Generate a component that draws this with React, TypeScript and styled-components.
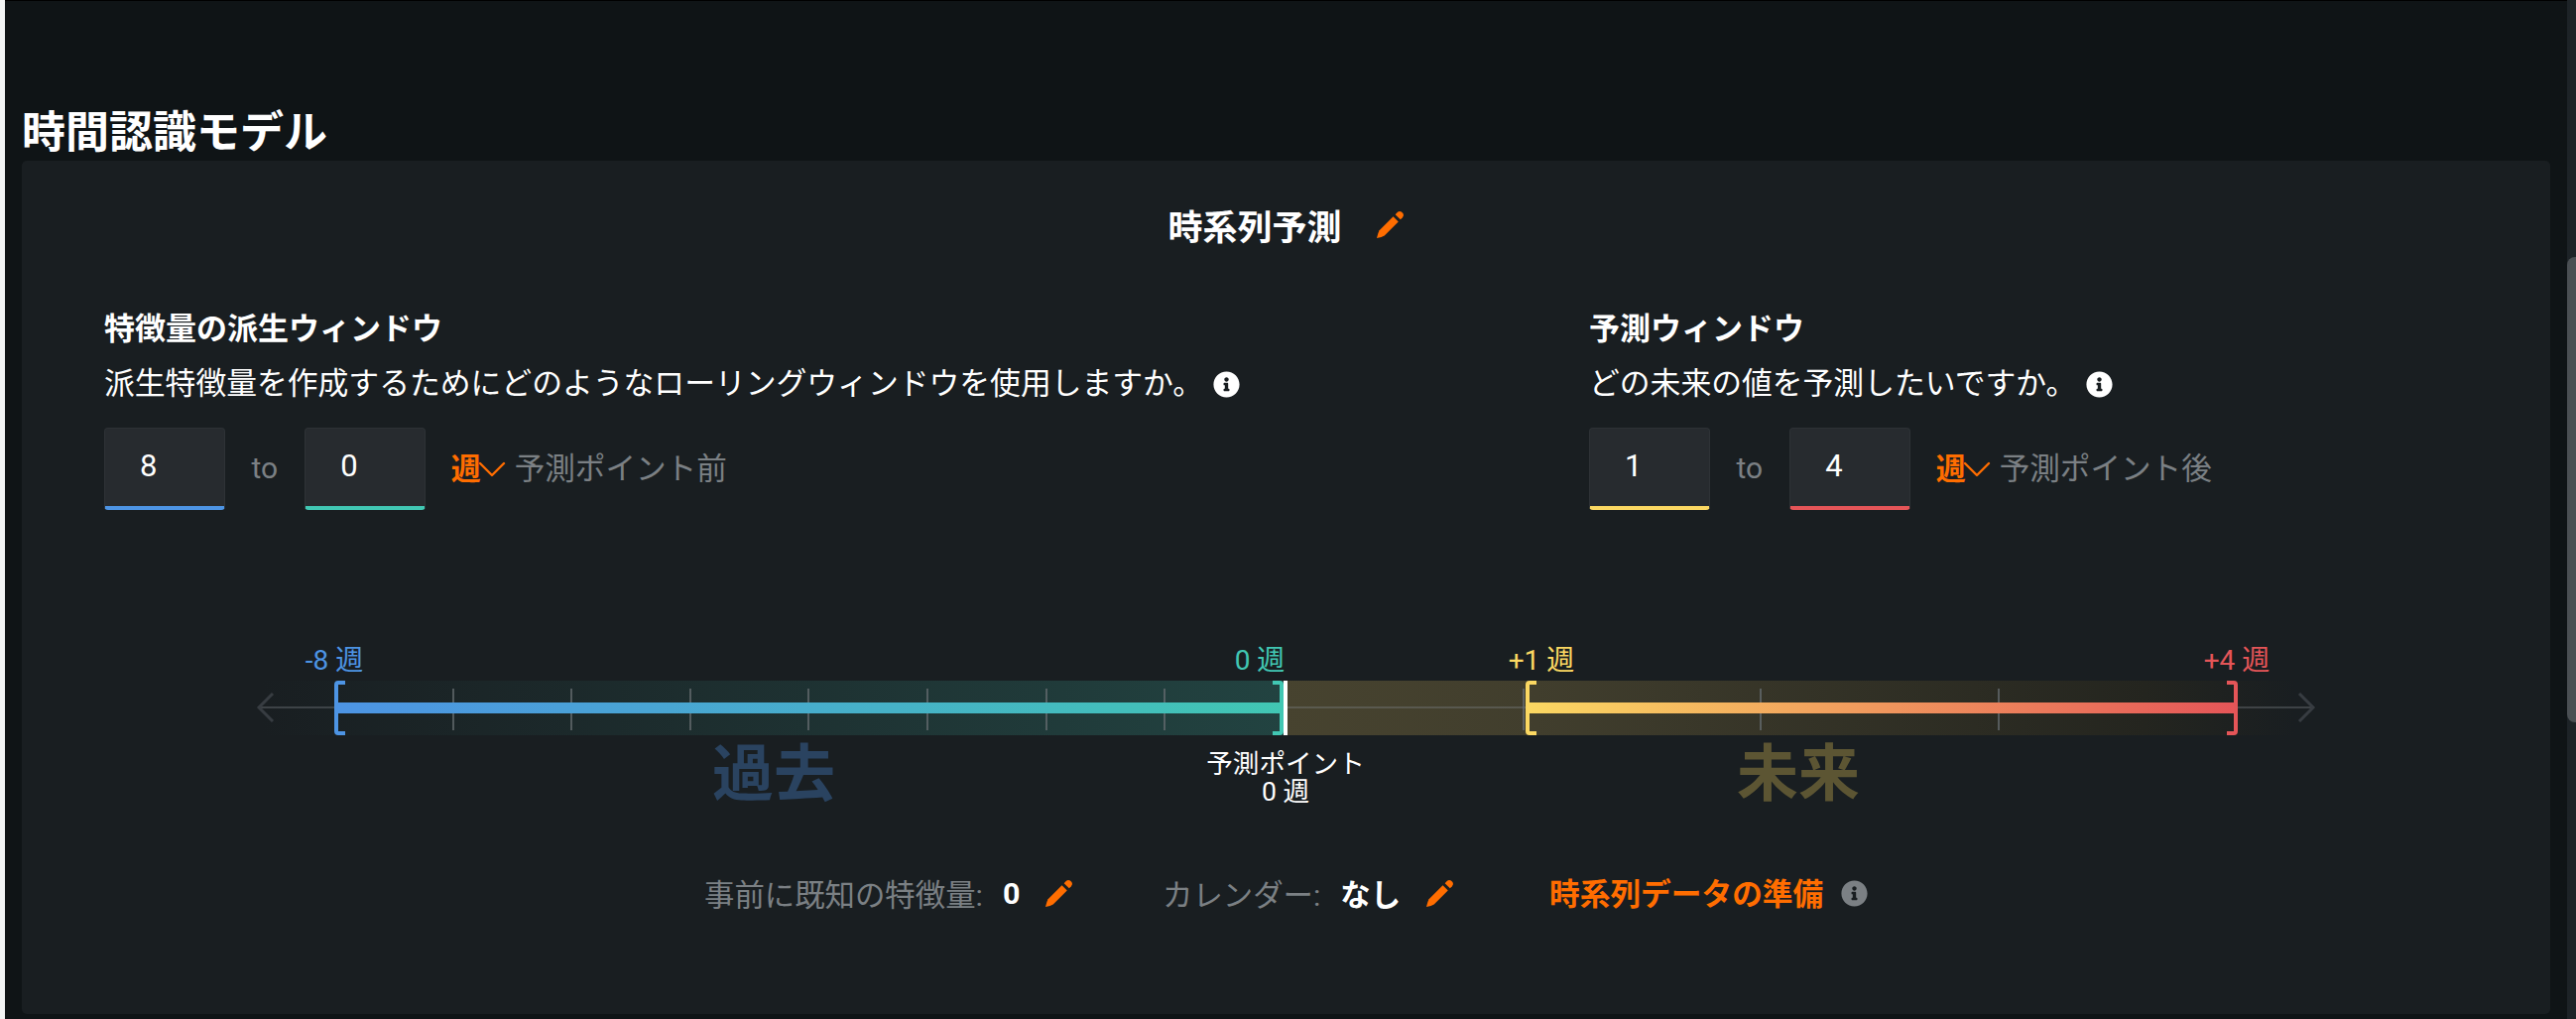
import styled, { createGlobalStyle } from 'styled-components';
import { FaInfoCircle } from 'react-icons/fa';
import { LuChevronDown } from 'react-icons/lu';

const ORANGE = '#ff6d00';
const BLUE = '#4d94e4';
const TEAL = '#41c7b3';
const YELLOW = '#fbd862';
const RED = '#e55558';

const GlobalStyle = createGlobalStyle`
    html, body {
        margin: 0;
        height: 100%;
        overflow: hidden;
        background: #0f1416;
    }
    body {
        font-family: Roboto, "Noto Sans CJK JP", sans-serif;
        color: #fff;
    }
`;

const Page = styled.div`
    display: flex;
    height: 1027px;
    background: #f3f5f5;
    padding-left: 5px;
    box-sizing: border-box;
`;

const Main = styled.main`
    flex: 1;
    min-width: 0;
    background: #0f1416;
    border-top: 1px solid #000;
    padding: 0 17px;
`;

const Scrollbar = styled.div`
    width: 9px;
    background: #1d2327;
    padding-top: 259px;
    box-sizing: border-box;
    height: 100%;
`;

const ScrollThumb = styled.div`
    height: 469px;
    background: #4a4f53;
    border-radius: 8px 0 0 8px;
`;

const PageTitle = styled.h1`
    margin: 0;
    padding-top: 103px;
    font-size: 44px;
    line-height: 60px;
    font-weight: 700;
    height: 58px;
`;

const Panel = styled.section`
    background: #191e21;
    border-radius: 5px;
    height: 860px;
    padding-top: 40px;
    box-sizing: border-box;
`;

const ModelTitle = styled.div`
    display: flex;
    justify-content: center;
    align-items: center;
    gap: 35px;
    height: 48px;
    font-size: 35px;
    font-weight: 700;
`;

const PencilSvg = styled.svg`
    color: ${ORANGE};
    width: 28px;
    height: 28px;
    flex: none;
    fill: currentColor;
`;

const EditIcon = () => (
    <PencilSvg viewBox="0 0 27 27">
        <path d="M16 6 L21 11 L7.5 24.5 Q5 26 0 27 Q1 22 2.5 19.5 Z" />
        <path d="M18 4 L20 2 Q22 0 24 1.5 L25.5 3 Q27 5 25 7 L23 9 Z" />
    </PencilSvg>
);

const Windows = styled.div`
    display: grid;
    grid-template-columns: 1497px 1fr;
    padding: 62px 0 0 83px;
`;

const WindowTitle = styled.div`
    font-size: 31px;
    line-height: 40px;
    font-weight: 700;
`;

const WindowQuestion = styled.div`
    display: flex;
    align-items: center;
    gap: 10px;
    font-size: 30.8px;
    line-height: 40px;
    margin-top: 15px;
    white-space: nowrap;
`;

const InfoIcon = styled(FaInfoCircle)<{ $muted?: boolean }>`
    color: ${p => (p.$muted ? '#7b8084' : '#fff')};
    width: 27px;
    height: 27px;
    flex: none;
`;

const RangeRow = styled.div`
    display: flex;
    align-items: center;
    gap: 27px;
    margin-top: 24px;
`;

const WeekInput = styled.input<{ $accent: string }>`
    width: 121.5px;
    height: 83px;
    box-sizing: border-box;
    padding: 0 0 3px 35px;
    background: #272b2f;
    border: 1px solid #2e3236;
    border-bottom: 4px solid ${p => p.$accent};
    border-radius: 4px;
    outline: none;
    color: #fff;
    font: 400 31px Roboto, sans-serif;
`;

const RangeTo = styled.span`
    color: #7b8084;
    font-size: 30px;
    margin-bottom: 2px;
`;

const UnitGroup = styled.div`
    display: flex;
    align-items: center;
    margin: 0 0 5px -1px;
`;

const UnitSelect = styled.span`
    display: flex;
    align-items: center;
    color: ${ORANGE};
    font-size: 30px;
    font-weight: 700;
    svg {
        width: 48px;
        height: 48px;
        margin: 6px -12px 0 -13px;
        stroke-width: 1.2;
    }
`;

const UnitNote = styled.span`
    color: #7b8084;
    font-size: 30.6px;
    margin-left: 11px;
`;

const Timeline = styled.div`
    position: relative;
    height: 180px;
    margin-top: 126px;
`;

const TimelineChart = styled.svg`
    display: block;
    width: 100%;
    height: 180px;
`;

const Marker = styled.span<{ $color: string }>`
    position: absolute;
    top: 8px;
    transform: translateX(-50%);
    color: ${p => p.$color};
    font-size: 28px;
    line-height: 36px;
    white-space: nowrap;
`;

const ForecastPoint = styled.div`
    position: absolute;
    top: 116px;
    left: 1274px;
    transform: translateX(-50%);
    text-align: center;
    font-size: 26.6px;
    line-height: 28px;
    white-space: nowrap;
`;

const EraLabel = styled.span<{ $color: string; $left: number }>`
    position: absolute;
    top: 105px;
    left: ${p => p.$left}px;
    transform: translateX(-50%);
    color: ${p => p.$color};
    font-size: 62px;
    line-height: 72px;
    font-weight: 700;
    white-space: nowrap;
`;

const Footer = styled.div`
    display: flex;
    align-items: center;
    height: 40px;
    margin-top: 60px;
    padding-left: 688px;
    font-size: 30.4px;
    white-space: nowrap;
`;

const FooterLabel = styled.span`
    color: #7b8084;
`;

const FooterValue = styled.span`
    font-weight: 700;
    margin-left: 20px;
`;

const FooterItem = styled.div<{ $width: number }>`
    display: flex;
    align-items: center;
    width: ${p => p.$width}px;
    svg {
        margin-left: 26px;
    }
`;

const PrepareLink = styled.span`
    color: ${ORANGE};
    font-weight: 700;
    font-size: 30.7px;
    margin: 0 0 3px -2px;
`;

const PrepareIcon = styled(InfoIcon)`
    margin-left: 18px;
`;

// chart coordinates are panel-relative: x = page x - 22, y = page y - 640
const AXIS_Y = 73;
const BAND_TOP = 46;
const BAND_H = 55;
const X_START = 315;
const X_ZERO = 1272;
const X_FIRST = 1516;
const X_END = 2234;
const pastTicks = [435, 554, 674, 793, 913, 1033, 1152];
const futureTicks = [1514, 1753, 1993];

const Bracket = ({ x, color, flip }: { x: number; color: string; flip?: boolean }) => {
    const dir = flip ? -1 : 1;
    const top = BAND_TOP + 2;
    const bottom = BAND_TOP + BAND_H - 2;
    return (
        <path
            d={`M${x + 11 * dir} ${top} H${x + 4 * dir} Q${x + 2 * dir} ${top} ${x + 2 * dir} ${top + 2} V${bottom - 2} Q${x + 2 * dir} ${bottom} ${x + 4 * dir} ${bottom} H${x + 11 * dir}`}
            fill="none"
            stroke={color}
            strokeWidth={4}
        />
    );
};

export default function App() {
    return (
        <Page>
            <GlobalStyle />
            <Main>
                <PageTitle>時間認識モデル</PageTitle>
                <Panel>
                    <ModelTitle>
                        時系列予測
                        <EditIcon />
                    </ModelTitle>
                    <Windows>
                        <div>
                            <WindowTitle>特徴量の派生ウィンドウ</WindowTitle>
                            <WindowQuestion>
                                派生特徴量を作成するためにどのようなローリングウィンドウを使用しますか。
                                <InfoIcon />
                            </WindowQuestion>
                            <RangeRow>
                                <WeekInput readOnly value="8" $accent={BLUE} />
                                <RangeTo>to</RangeTo>
                                <WeekInput readOnly value="0" $accent={TEAL} />
                                <UnitGroup>
                                    <UnitSelect>週<LuChevronDown /></UnitSelect>
                                    <UnitNote>予測ポイント前</UnitNote>
                                </UnitGroup>
                            </RangeRow>
                        </div>
                        <div>
                            <WindowTitle>予測ウィンドウ</WindowTitle>
                            <WindowQuestion>
                                どの未来の値を予測したいですか。
                                <InfoIcon />
                            </WindowQuestion>
                            <RangeRow>
                                <WeekInput readOnly value="1" $accent={YELLOW} />
                                <RangeTo>to</RangeTo>
                                <WeekInput readOnly value="4" $accent={RED} />
                                <UnitGroup>
                                    <UnitSelect>週<LuChevronDown /></UnitSelect>
                                    <UnitNote>予測ポイント後</UnitNote>
                                </UnitGroup>
                            </RangeRow>
                        </div>
                    </Windows>
                    <Timeline>
                        <TimelineChart viewBox="0 0 2549 180" preserveAspectRatio="xMinYMin">
                            <defs>
                                <linearGradient id="bandPast" x1="0" x2="1" y1="0" y2="0">
                                    <stop offset="0" stopColor="#191e21" />
                                    <stop offset="1" stopColor="#224341" />
                                </linearGradient>
                                <linearGradient id="bandFuture" x1="0" x2="1" y1="0" y2="0">
                                    <stop offset="0" stopColor="#47432f" />
                                    <stop offset="0.25" stopColor="#413e2d" />
                                    <stop offset="0.85" stopColor="#24251f" />
                                    <stop offset="1" stopColor="#191e21" />
                                </linearGradient>
                                <linearGradient id="barPast" x1="0" x2="1" y1="0" y2="0">
                                    <stop offset="0" stopColor={BLUE} />
                                    <stop offset="1" stopColor={TEAL} />
                                </linearGradient>
                                <linearGradient id="barFuture" x1="0" x2="1" y1="0" y2="0">
                                    <stop offset="0" stopColor={YELLOW} />
                                    <stop offset="1" stopColor={RED} />
                                </linearGradient>
                            </defs>
                            <rect x={242} y={BAND_TOP} width={X_ZERO - 242} height={BAND_H} fill="url(#bandPast)" />
                            <rect x={X_ZERO} y={BAND_TOP} width={2292 - X_ZERO} height={BAND_H} fill="url(#bandFuture)" />
                            <line x1={240} x2={2309} y1={AXIS_Y} y2={AXIS_Y} stroke="#82878c" strokeOpacity={0.35} strokeWidth={2} />
                            <path d={`M253 ${AXIS_Y - 14} L239 ${AXIS_Y} L253 ${AXIS_Y + 14}`} fill="none" stroke="#373c41" strokeWidth={3} />
                            <path d={`M2296 ${AXIS_Y - 14} L2310 ${AXIS_Y} L2296 ${AXIS_Y + 14}`} fill="none" stroke="#373c41" strokeWidth={3} />
                            {[...pastTicks, ...futureTicks].map(x => (
                                <line key={x} x1={x} x2={x} y1={54} y2={96} stroke="#666c70" strokeWidth={1.5} />
                            ))}
                            <rect x={X_START + 2} y={68} width={X_ZERO - X_START - 2} height={11} fill="url(#barPast)" />
                            <rect x={X_FIRST + 2} y={68} width={X_END - X_FIRST - 2} height={11} fill="url(#barFuture)" />
                            <Bracket x={X_START} color={BLUE} />
                            <Bracket x={X_ZERO} color={TEAL} flip />
                            <Bracket x={X_FIRST} color={YELLOW} />
                            <Bracket x={X_END} color={RED} flip />
                            <rect x={X_ZERO} y={BAND_TOP} width={4} height={BAND_H} fill="#fff" />
                        </TimelineChart>
                        <Marker $color={BLUE} style={{ left: X_START }}>-8 週</Marker>
                        <Marker $color={TEAL} style={{ left: X_ZERO - 24 }}>0 週</Marker>
                        <Marker $color={YELLOW} style={{ left: X_FIRST + 16 }}>+1 週</Marker>
                        <Marker $color={RED} style={{ left: X_END - 1 }}>+4 週</Marker>
                        <ForecastPoint>
                            予測ポイント
                            <br />
                            0 週
                        </ForecastPoint>
                        <EraLabel $color="#2a4360" $left={758}>過去</EraLabel>
                        <EraLabel $color="#5c5533" $left={1791}>未来</EraLabel>
                    </Timeline>
                    <Footer>
                        <FooterItem $width={462}>
                            <FooterLabel>事前に既知の特徴量:</FooterLabel>
                            <FooterValue>0</FooterValue>
                            <EditIcon />
                        </FooterItem>
                        <FooterItem $width={392}>
                            <FooterLabel>カレンダー:</FooterLabel>
                            <FooterValue>なし</FooterValue>
                            <EditIcon />
                        </FooterItem>
                        <PrepareLink>時系列データの準備</PrepareLink>
                        <PrepareIcon $muted />
                    </Footer>
                </Panel>
            </Main>
            <Scrollbar>
                <ScrollThumb />
            </Scrollbar>
        </Page>
    );
}
